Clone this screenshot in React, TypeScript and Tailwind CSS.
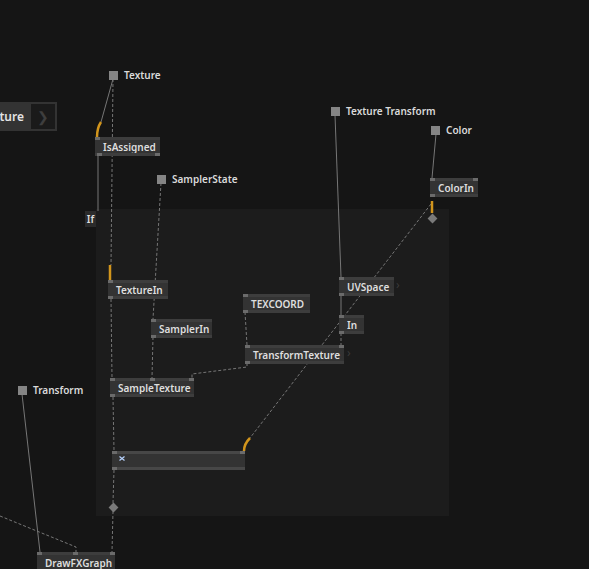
import React from 'react'

type NodeProps = {
  x: number
  y: number
  w: number
  h?: number
  label?: string
  top?: number[]
  bottom?: number[]
  strip?: string
  children?: React.ReactNode
}

function Pins({ list }: { list: number[] }) {
  return (
    <>
      {list.map((p) => (
        <div key={p} className="absolute top-0 h-[3px] w-[5px] bg-[#6b6b6b]" style={{ left: p }} />
      ))}
    </>
  )
}

// a patch node on the canvas: pin strip, label, pin strip
function Node({ x, y, w, h = 19, label, top = [0], bottom = [0], strip = '#3d3d3d', children }: NodeProps) {
  return (
    <div className="absolute flex flex-col bg-[#333333]" style={{ left: x, top: y, width: w, height: h }}>
      <div className="relative h-[3px]" style={{ background: strip }}>
        <Pins list={top} />
      </div>
      <div className="flex-1 flex items-center pl-[8px] text-[10px] font-semibold leading-none text-[#dedede] whitespace-nowrap">
        {label}
        {children}
      </div>
      <div className="relative h-[3px]" style={{ background: strip }}>
        <Pins list={bottom} />
      </div>
    </div>
  )
}

function IOBox({ x, y, label }: { x: number; y: number; label: string }) {
  return (
    <div className="absolute flex items-center gap-[6px]" style={{ left: x, top: y }}>
      <div className="w-[9px] h-[9px] bg-[#858585]" />
      <span className="text-[10px] font-semibold leading-none text-[#dadada] whitespace-nowrap -mt-[1px]">{label}</span>
    </div>
  )
}

function Diamond({ x, y }: { x: number; y: number }) {
  return <div className="absolute w-[7px] h-[7px] bg-[#7a7a7a] rotate-45" style={{ left: x - 3.5, top: y - 3.5 }} />
}

export default function App() {
  const grey = '#767676'
  const orange = '#d2951c'
  return (
    <div className="relative w-[589px] h-[569px] overflow-hidden bg-[#151515] font-['Noto_Sans',sans-serif]">
      {/* region */}
      <div className="absolute left-[96px] top-[209px] w-[353px] h-[307px] bg-[#1c1c1c]" />
      <div className="absolute left-[85px] top-[211px] w-[11px] h-[16px] bg-[#2b2b2b] flex items-center justify-center text-[10px] font-semibold text-[#dedede]">
        If
      </div>

      {/* links */}
      <svg className="absolute inset-0" width={589} height={569}>
        <g fill="none" stroke={grey} strokeWidth={1}>
          <path d="M113 79 L101 122" />
          <path d="M98 155 L98 211" />
          <path d="M335 115 L341 277" />
          <path d="M436 134 L432 178" />
          <path d="M341 296 L341 315" />
          <path d="M22 394 L40 552" />
        </g>
        <g fill="none" stroke={grey} strokeWidth={1} strokeDasharray="3 2">
          <path d="M113 79 L111 265" />
          <path d="M161 183 L153 319" />
          <path d="M111 299 L112 378" />
          <path d="M153 337 L152 378" />
          <path d="M247 363 L247 367 L192 374 L192 378" />
          <path d="M245 312 L247 345" />
          <path d="M341 333 L341 345" />
          <path d="M431 204 L250 438" />
          <path d="M113 397 L114 451" />
          <path d="M114 470 L113 503" />
          <path d="M113 511 L112 552" />
          <path d="M0 516 L76 547 L76 552" />
        </g>
        <g fill="none" stroke={orange} strokeWidth={2.5}>
          <path d="M101 122 Q97 128 97 137" />
          <path d="M110 265 L110 280" />
          <path d="M432 201 L432 213" />
          <path d="M250 438 Q244 444 244 451" />
        </g>
      </svg>

      {/* partial node cut by the left edge */}
      <div className="absolute left-0 top-[102px] h-[29px] flex">
        <div className="w-[29px] bg-[#333333] flex items-center text-[12px] font-semibold text-[#e4e4e4] leading-none justify-end pr-[5px]">
          ture
        </div>
        <div className="w-[28px] bg-[#333333] p-[2px]">
          <div className="w-full h-full bg-[#1a1a1a] flex items-center justify-center text-[#3e3e3e] text-[14px] leading-none">
            ❯
          </div>
        </div>
      </div>

      <IOBox x={109} y={71} label="Texture" />
      <IOBox x={157} y={175} label="SamplerState" />
      <IOBox x={331} y={107} label="Texture Transform" />
      <IOBox x={431} y={126} label="Color" />
      <IOBox x={18} y={386} label="Transform" />

      <Node x={95} y={137} w={65} label="IsAssigned" top={[0]} bottom={[2, 60]} />
      <Node x={108} y={280} w={60} label="TextureIn" top={[0]} bottom={[0]} />
      <Node x={151} y={319} w={61} label="SamplerIn" />
      <Node x={110} y={378} w={84} label="SampleTexture" top={[0, 40, 79]} bottom={[0]} />
      <Node x={243} y={294} w={67} label="TEXCOORD" />
      <Node x={245} y={345} w={99} label="TransformTexture" top={[0, 94]} />
      <Node x={339} y={277} w={55} label="UVSpace" />
      <Node x={339} y={315} w={25} label="In" />
      <Node x={430} y={178} w={48} label="ColorIn" top={[0, 43]} />
      <Node x={112} y={451} w={133} top={[0, 128]} strip="#474747">
        <svg width={6} height={5} className="mt-[-4px] ml-[-1px]">
          <path d="M0.5 0.5 L5.5 4.5 M5.5 0.5 L0.5 4.5" stroke="#b9d4ff" strokeWidth={1.2} />
        </svg>
      </Node>
      <Node x={37} y={552} w={78} h={22} label="DrawFXGraph" top={[0, 36, 73]} />

      <span className="absolute left-[396px] top-[279px] text-[12px] text-[#3a3a3a] leading-none">›</span>
      <span className="absolute left-[347px] top-[347px] text-[12px] text-[#3a3a3a] leading-none">›</span>

      <Diamond x={432} y={218} />
      <Diamond x={113} y={507} />
    </div>
  )
}
